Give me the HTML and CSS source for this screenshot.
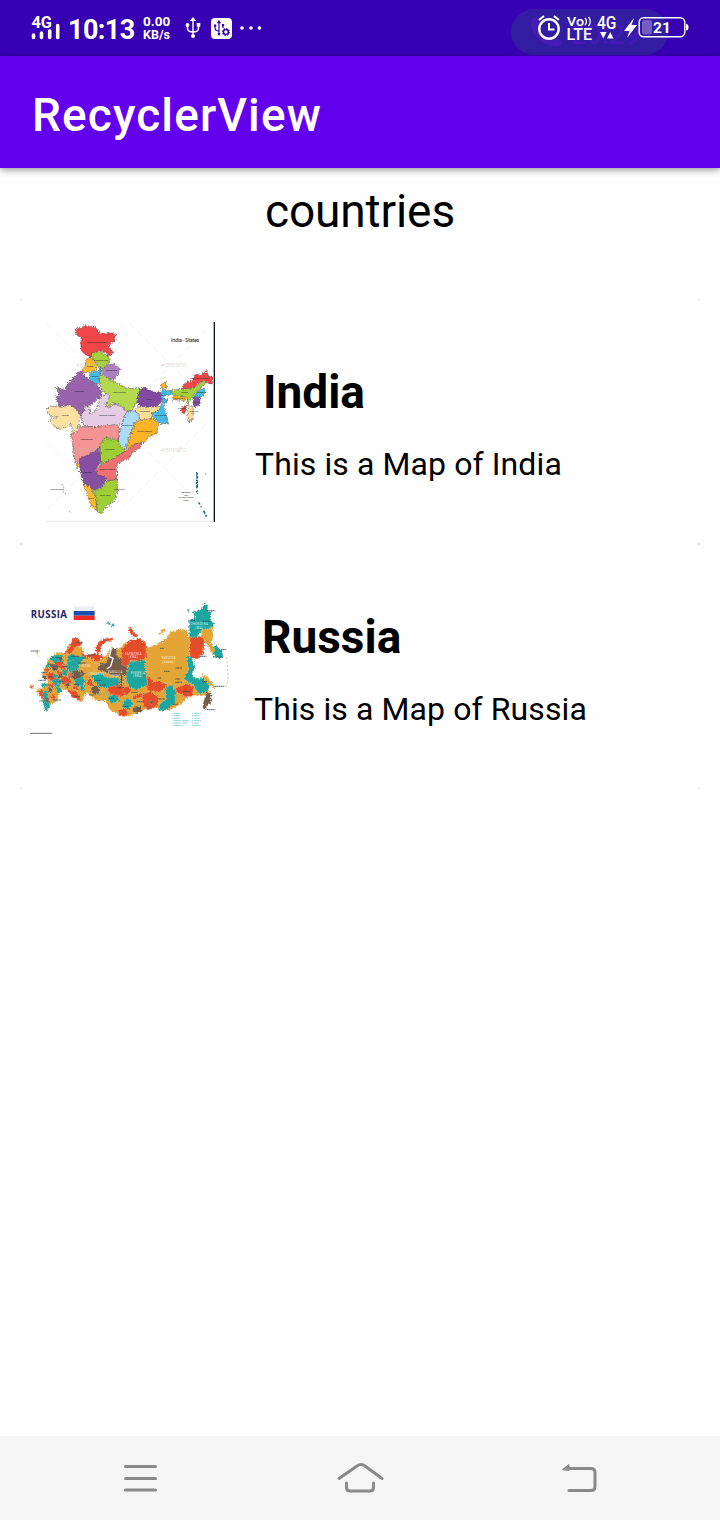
FILE: index.html
```html
<!DOCTYPE html>
<html lang="en">
<head>
<meta charset="utf-8">
<title>RecyclerView</title>
<link rel="stylesheet" href="styles.css">
</head>
<body>
<div class="screen">
  <header class="status">
    <svg class="signal" viewBox="0 0 32 28" width="32" height="28">
      <text x="0.5" y="12.500" font-size="17" font-weight="700" textLength="20.500" lengthAdjust="spacingAndGlyphs">4G</text>
      <path d="M2.500 20v2.500M10.500 18v4.500M18.700 16v6.500M26.700 10.500v12" stroke="#fff" stroke-width="3.600" stroke-linecap="round"/>
    </svg>
    <span class="clock">10:13</span>
    <span class="speed"><span>0.00</span><span class="unit">KB/s</span></span>
    <svg class="usb" viewBox="0 0 16 22" width="16" height="22">
      <path d="M8 3v15M2.500 8v3q0 4 5.500 4t5.500-4V8" fill="none" stroke="#fff" stroke-width="1.400"/>
      <path d="M8 0l3 4H5z"/><circle cx="8" cy="19" r="2"/><circle cx="2.500" cy="8" r="1.900"/><path d="M11.700 6h3.600v3.600h-3.600z"/>
    </svg>
    <svg class="debug" viewBox="0 0 21 21" width="21" height="21">
      <rect width="21" height="21" rx="4"/>
      <g fill="none" stroke="#3700b3" stroke-width="1.200"><path d="M8 4v12M4 8v2q0 3 4 3M12 7v3"/><circle cx="14.900" cy="14" r="2.500" stroke-width="1.600"/><circle cx="14.900" cy="14" r="3.600" stroke-width="1" stroke-dasharray="1.400 1.400"/></g>
      <path d="M8 2l2.200 3.300H5.800zM3 6.500h2.200v2.200H3zM10.900 6h2.200v2.200h-2.200zM6.800 15h2.400v2.300H6.800z" fill="#3700b3"/>
    </svg>
    <svg class="dots" viewBox="0 0 22 6" width="22" height="6"><circle cx="2" cy="3" r="1.800"/><circle cx="11" cy="3" r="1.800"/><circle cx="19.500" cy="3" r="1.800"/></svg>
    <div class="pill">
      <svg viewBox="0 0 157 46" width="157" height="46"><path d="M22 9c5-3 8 3 7 9 0 6 5 9 10 12 7-2 12 1 11 5-2 4-10 3-17-1C23 28 17 15 22 9z" fill="#451db4"/><text x="60" y="35" font-size="27" font-weight="500" fill="#431bb4" textLength="69">20:29</text></svg>
    </div>
    <svg class="tray" viewBox="0 0 156 30" width="156" height="30">
      <g fill="none" stroke="#fff"><circle cx="13" cy="16" r="9.700" stroke-width="2.400"/><path d="M13 10v6.500h5.500" stroke-width="2"/><path d="M3 7l5-4M18 3l5 4" stroke-width="2.200"/></g>
      <text x="31" y="13" font-size="13" font-weight="500" textLength="17" lengthAdjust="spacingAndGlyphs">Vo</text>
      <path d="M49 5q3 3.500 0 7M52.500 4q3.500 4.500 0 9" fill="none" stroke="#fff" stroke-width="1.300"/>
      <text x="30.500" y="26.500" font-size="16" font-weight="500" textLength="25.500" lengthAdjust="spacingAndGlyphs">LTE</text>
      <text x="61" y="15.500" font-size="17.500" font-weight="500" textLength="19.500" lengthAdjust="spacingAndGlyphs">4G</text>
      <path d="M64 19h6.500l-3.200 6.500zM71 25.500h6.500L74.300 19z"/>
      <path d="M98 5L88 18h5.500L91 25l10-13h-5.500z"/>
      <rect x="106" y="7" width="10" height="14.500" rx="2.500" fill="#755cc2"/>
      <rect x="103.200" y="4.700" width="45.600" height="19" rx="4.500" fill="none" stroke="#fff" stroke-width="1.400"/>
      <path d="M150 11q2.500 0 2.500 3.200t-2.500 3.200z"/>
      <text x="117" y="19.500" font-size="15.500" font-weight="700">21</text>
    </svg>
  </header>
  <div class="appbar"><h1>RecyclerView</h1></div>
  <main>
    <h2 class="heading">countries</h2>
    <article class="card">
      <svg class="map" viewBox="-30 36 600 600" width="200" height="200">
        <defs><filter id="rough" x="-5%" y="-5%" width="110%" height="110%"><feTurbulence type="fractalNoise" baseFrequency="0.22" numOctaves="2" seed="4"/><feDisplacementMap in="SourceGraphic" scale="13" xChannelSelector="R" yChannelSelector="G"/></filter></defs>
        <path d="M20 42L180 202M250 42L20 272M270 42L500 272M500 60L250 310M20 400L220 600M500 340L250 590M300 400L500 600M180 440L20 600" fill="none" stroke="#f5f5f5" stroke-width="3" stroke-dasharray="20 14"/>
        <path d="M523 36V636" stroke="#10141c" stroke-width="4"/><path d="M15 634H521" stroke="#ddd" stroke-width="2"/>
        <g filter="url(#rough)" stroke="#554b4b" stroke-width="1.500" stroke-linejoin="round">
          <path fill="#ef4548" d="M106 60L116 52 125 56 128 50 140 44 150 50 160 48 172 58 178 68 186 70 196 72 204 67 210 70 220 68 230 74 222 84 226 92 210 100 206 112 218 124 218 130 206 138 198 128 190 124 176 124 158 130 154 142 136 134 124 122 122 96 124 86 112 76 106 68z"/>
          <path fill="#a5d13c" d="M154 142L158 128 180 124 206 140 210 156 200 164 188 178 176 170 170 158z"/>
          <path fill="#fdb92b" d="M138 148L154 140 166 156 172 168 164 182 140 188 124 182 136 168z"/>
          <path fill="#43bde9" d="M148 194L164 182 174 186 182 172 184 196 176 206 184 226 164 220 150 212z"/>
          <path fill="#ad80c0" d="M188 180L200 164 222 162 240 176 236 190 222 208 204 206 188 196z"/>
          <path fill="#b4d94f" d="M180 190L188 196 212 210 236 222 262 236 298 234 302 256 288 280 278 300 262 304 240 284 214 278 206 292 196 288 206 268 204 256 184 240 178 210z"/>
          <path fill="#9863ac" d="M48 232L72 240 84 222 108 194 124 182 136 200 150 212 168 222 184 244 186 262 168 268 160 282 146 286 130 304 124 320 106 300 90 284 58 290 48 262 58 252z"/>
          <path fill="#fee0a3" d="M18 300L30 288 60 292 90 284 112 300 122 318 116 338 114 352 100 370 92 340 78 354 60 358 44 350 28 330 40 328 52 320 36 322 26 312z"/>
          <path fill="#e4cce4" d="M128 338L122 318 134 300 132 288 150 288 148 312 166 304 176 280 182 260 200 250 208 258 206 272 196 286 206 294 222 280 244 290 262 304 254 318 246 344 222 346 196 352 160 350 140 352z"/>
          <path fill="#814a9f" d="M298 240L314 232 340 246 366 248 364 276 350 290 322 292 302 288 290 276z"/>
          <path fill="#fdb92b" d="M364 222L376 216 380 232 364 236z"/>
          <path fill="#43bde9" d="M366 238L394 242 396 252 382 258 372 250 372 264 384 270 370 286 376 306 386 342 360 340 342 320 334 306 360 290 368 276 364 256z"/>
          <path fill="#fedd96" d="M290 290L322 292 350 290 362 292 352 306 334 308 340 324 322 332 300 330 294 312 284 302z"/>
          <path fill="#a8dcf7" d="M262 304L282 302 298 312 296 330 282 338 280 360 266 378 264 398 252 422 238 408 234 376 244 350 252 324z"/>
          <path fill="#fcb328" d="M298 332L340 324 356 342 350 370 330 378 314 396 286 402 258 418 272 376 282 342z"/>
          <path fill="#f49394" d="M94 370L112 366 116 350 160 350 222 344 236 350 238 376 232 394 214 384 196 382 194 400 180 412 168 424 152 430 122 448 118 460 106 458 100 420z"/>
          <path fill="#9fce35" d="M180 404L196 382 222 390 234 390 244 410 258 422 230 440 210 454 184 460 178 440z"/>
          <path fill="#f07072" d="M310 396L286 402 258 422 232 440 184 462 166 480 172 496 192 500 202 512 230 508 230 464 246 454 268 444 276 430 300 412z"/>
          <path fill="#874fa2" d="M118 446L150 432 180 410 182 456 166 480 174 496 198 502 194 516 182 534 160 540 136 526 124 500 120 474z"/>
          <path fill="#fdb92b" d="M130 520L150 530 166 560 172 602 158 594 148 572zM108 462l8-2 4 12-6 2z"/>
          <path fill="#9fce35" d="M182 536L198 514 232 508 232 548 220 576 196 590 184 612 172 604 166 560 160 542z"/>
          <path fill="#ef4548" d="M424 238L436 218 456 212 468 192 482 196 500 182 504 198 520 202 516 222 502 220 490 212 474 220 462 234z"/>
          <path fill="#a5d13c" d="M398 240L428 238 462 234 490 212 496 222 474 242 458 258 444 282 440 262 398 262z"/>
          <path fill="#fdb92b" d="M398 256L440 262 444 268 428 272 398 268z"/>
          <path fill="#43bde9" d="M470 248L490 234 498 246 482 262 460 260z"/>
          <path fill="#8350a5" d="M458 262L480 262 480 286 462 290z"/><path fill="#fedd96" d="M446 286L460 290 458 330 448 336 442 310z"/><path fill="#e84145" d="M424 294L440 286 434 312 424 306z"/>
        </g>
        <g class="watermark"><text x="106" y="170">◕envato</text><text x="360" y="170">◕envato</text><text x="106" y="427">◕envato</text><text x="360" y="427">◕envato</text></g>
        <g fill="none" stroke="#236b8d"><path d="M472 486l-2 66" stroke-width="6" stroke-dasharray="20 3 26 6" filter="url(#rough)"/><path d="M476 578l16 26 10 20" stroke-width="5" stroke-dasharray="6 7 3 12 10 4"/></g>
        <path d="M66 522l6 12-3 12 10 6M88 604l3 3M206 588l10 2M496 490v5" fill="none" stroke="#555" stroke-width="2" stroke-dasharray="4 4"/>
        <g class="labels">
          <text x="170" y="100">Jammu and Kashmir</text><text x="184" y="152">Himachal Prad.</text><text x="150" y="171">Punjab</text><text x="164" y="201">Haryana</text><text x="214" y="184">Uttarakhand</text><text x="238" y="248">Uttar Pradesh</text><text x="118" y="247">Rajasthan</text><text x="328" y="270">Bihar</text><text x="76" y="318">Gujarat</text><text x="202" y="319">Madhya Pradesh</text><text x="314" y="307">Jharkhand</text><text x="362" y="317">West Bengal</text><text x="264" y="348">Chhattisgarh</text><text x="314" y="366">Orissa (Odisha)</text><text x="140" y="391">Maharashtra</text><text x="208" y="420">Telangana</text><text x="202" y="480">Andhra Pradesh</text><text x="142" y="490">Karnataka</text><text x="196" y="558">Tamil Nadu</text><text x="152" y="567">Kerala</text><text x="238" y="540">Puducherry</text><text x="50" y="541">Lakshadweep</text><text x="478" y="207">Arunachal Pradesh</text><text x="434" y="248">Assam</text><text x="418" y="268">Meghalaya</text><text x="484" y="250">Nagaland</text><text x="468" y="278">Manipur</text><text x="462" y="306">Mizoram</text><text x="424" y="298">Tripura</text><text x="438" y="549">Andaman</text><text x="438" y="557">and</text><text x="438" y="565">Nicobar Islands</text><text x="438" y="573">(India)</text>
        </g>
        <text x="393" y="95" font-size="16" fill="#222" textLength="85">India - States</text>
      </svg>
      <div class="info"><h3>India</h3><p>This is a Map of India</p></div>
    </article>
    <article class="card russia">
      <svg class="map" viewBox="30 -84 600 600" width="200" height="200">
        <text x="32" y="68" class="rtitle" textLength="109">RUSSIA</text>
        <path fill="#eceef1" d="M161 34h63v14h-63z"/><path fill="#1750b0" d="M161 48h63v14h-63z"/><path fill="#ee2927" d="M161 62h63v13h-63z"/>
        <path d="M30 415h66" stroke="#555" stroke-width="2.500"/>
        <g filter="url(#rough)" stroke="#e4d3b1" stroke-width=".8">
          <path fill="#e3a535" d="M84 196L110 172 134 174 150 144 190 160 190 184 240 194 262 178 270 160 300 158 320 140 374 140 384 160 500 104 510 180 512 260 560 270 570 300 548 302 510 300 490 322 450 346 420 346 400 330 350 356 310 364 270 346 256 316 230 318 200 292 184 320 160 308 150 284 120 284 110 320 86 330 80 350 70 318 56 302 48 284 72 278 84 258 66 236 74 218z"/>
          <path fill="#e54e2b" d="M132 178L150 154 158 130 172 128 184 142 184 154 166 154 156 174z"/>
          <path fill="#e54e2b" d="M184 166l12 14 34-6 20 10-16 16-30-14-18 0zM226 162l6-16 18-14 28-4 2 6-22 6-16 16 0 16-12 0z"/>
          <path fill="#1ba69f" d="M258 82l10 0 4 8-8-2zM274 88l8-3 4 6-8 4zM142 184l14-8 18 10 16-4 4 22-26 10-28-4zM86 192l18-12 24 0 2 22-22 4zM212 240l28-6 24 14 34 2 0 24-26 8-32-6-16-16z"/>
          <path fill="#745b4c" d="M232 212l26-8 14-42 18-2 0 24 12 6 18 4 4 46-42 4-30-14-20-6zM150 228l20-6 22 16-6 16-24 2zM90 210l22-6 10 14-22 10zM212 276l24-6 4 20-14 10-12-8z"/>
          <path fill="#e54e2b" d="M98 202l26-2 20 12-20 10zM80 236l18-4 16 14-14 14-16-8zM128 242l20 4 8 18-22 8-14-14zM198 270l12-28 10 32zM142 284l28 4 16 32-28-12zM262 276l36-6 18 12 4 18-28 6-26-12zM52 288l16-4 8 22-10 6zM296 344l22-4 8 16-14 10-16-6z"/>
          <path fill="#1ba69f" d="M96 256l16-6 16 8-6 18-20-2zM142 200l26-4 10 22-22 14-20-12zM128 222l16 4-2 18-18-6zM162 256l22-10 16 12-14 16-20 6zM68 290l14-4 4 26 4 22-12 16-8-20zM106 272l10-4 10 20-14 10zM232 294l26-6 6 14-20 8zM260 306l28-8 12 20-26 8z"/>
          <path fill="#745b4c" d="M112 238l12-4 6 12-14 4zM68 240l12 4-2 12-12-8zM136 262l12 2 2 12-12 2zM76 310l8-4 4 14-8 4zM178 228l14-4 6 10-12 8zM84 276l12 2 4 12-12 4zM116 186l12 2-2 10-10-2z"/>
          <path fill="#e54e2b" d="M108 226l14 2 4 10-14-2zM72 222l14-4 4 8-12 4zM160 270l16 4-2 12-14-4zM96 298l10 4-4 14-10-4zM116 210l20 2-2 10-14-2zM90 266l14 2-4 10-12-2zM146 232l12 6-4 8-10-4z"/>
          <path fill="#1ba69f" d="M76 210l12-6 4 10-12 4zM100 236l10 2 2 10-12 0zM152 214l12 4-2 12-10-6zM62 268l14-6 2 12-10 4zM114 258l10 2 0 10-10-2zM180 270l12 2 4 14-14 2z"/>
          <path fill="#e3a535" d="M184 198l28-8 26 24-28 24-24-10zM236 290l22 0 4 24-16 8zM50 170l6 4-2 8-5-5zM120 268l10 2 6 12-14-2zM132 206l10 0 0 10-12-2z"/>
          <path fill="#e54e2b" d="M30 270l12 4 0 6-10 2zM326 96l10 4 6 14 12 4-4 8-12-2-10-12zM304 162L320 146 330 134 360 130 378 146 378 190 356 198 332 196 322 216 306 210z"/>
          <path fill="#e3a535" d="M418 114l10-12 8 0-4 10-10 8z"/>
          <path fill="#1ba69f" d="M328 200L376 196 378 236 382 270 350 284 328 276 318 250zM310 318l18-10 12 20-16 16-18-8z"/>
          <path fill="#e3a535" d="M378 160L410 150 440 130 450 112 480 102 500 106 506 124 514 134 508 170 500 186 508 220 492 262 470 272 440 262 430 276 400 268 384 250 376 212 380 182z"/>
          <path fill="#e54e2b" d="M382 240l18 20 24 0 18 10-22 20-38-2zM510 126l34-2 10 6-4 46-18 16-22-4zM466 280l36-14 20 10-6 28-18 2-26-14zM366 298l26-8 22 16 0 28-30 12-16-16z"/>
          <path fill="#e54e2b" d="M308 278l14-4 12 12-10 12-16-4zM338 302l24-8 6 10-26 10z"/>
          <path fill="#1ba69f" d="M500 186l14 0 12 30-10 20 6 14 36 0 12 24-10 18-26 4-14-26-28-18 14-30zM436 278l18-8 12 18 0 36-26 20-26 4 6-24 18-10z"/>
          <path fill="#1ba69f" d="M508 98l0-20 18-10-8-18 24-6 10-18 12 4-2 16 14 8-6 22 14 8-10 20-28 4-18 20-20-2zM504 42l6 2-4 10zM584 148l22 20 4 20-16 2-16-10z"/>
          <path fill="#e3a535" d="M538 108l38-12 4 28-6 20 10 20-6 14-18-32-16-26zM548 236l22 20 18 20-6 4-26-20-10-18z"/>
          <path fill="#745b4c" d="M560 290l14 4 0 28-14 10-2 12-10-4 2-20 4-8zM340 334l22 0 6 14-18 8-12-6zM300 234l8 6 0 34-10-6zM388 320l8-4 4 8-8 6z"/>
        </g>
        <path d="M619 188q6 30 4 70l-7 24" fill="none" stroke="#e3b45b" stroke-width="3" stroke-dasharray="5 7"/>
        <path d="M274 160l-6 25 11 5-7 24-12 8" fill="none" stroke="#fff" stroke-width="4"/>
        <path d="M84 206l14 3M105 188h20M96 222h17M86 246h14M112 259h18M76 270h14M130 214h15M146 246h16M162 268h15M174 204h24M188 189h17M204 180h20M160 304h18M224 256h20M240 270h18M208 300h15M292 278h20M266 310h16M308 334h15M334 292h18M350 320h20M412 312h22M458 328h16M490 290h20M546 260h15M560 344h26M584 274h30M540 184h20M580 186h24M560 47h26M602 164h18M505 76h20M548 79h22M166 142h22M32 168h26M58 318h19M103 315h20M55 256h22M64 233h18M420 160h12M466 219h20M432 229h18M412 249h12M466 252h15M466 262h20M154 184h25M240 205h12" fill="none" stroke="#34465f" stroke-width="2.500" stroke-dasharray="4 1 6 1"/>
        <g class="region-labels"><text x="446" y="192">YAKUTIA</text><text x="446" y="205">(Sakha)</text><text x="340" y="180">TAYMYRIA</text><text x="340" y="190">(KRA)</text><text x="354" y="236">EVENKIA</text><text x="354" y="246">(KRA)</text><text x="538" y="90">CHUKOTKA</text><text x="538" y="101">(MA)</text><text x="286" y="235">YAMALIA</text><text x="286" y="245">(NEN)</text><text x="200" y="217">KOMI</text><text x="232" y="241">KHANTY</text></g>
        <path d="M457 355h26M457 362h25M457 370h21M457 377h52M457 384h44M457 391h34M516 355h27M516 362h22M516 370h24M516 377h28M516 384h20M516 391h26" stroke="#8ed4d0" stroke-width="3" stroke-dasharray="3 2 18 1"/>
      </svg>
      <div class="info"><h3>Russia</h3><p>This is a Map of Russia</p></div>
    </article>
  </main>
  <nav class="navbar">
    <svg viewBox="0 0 48 32" width="48" height="32"><path d="M9.500 4.500h30M9.500 16.500h30M9.500 28h30"/></svg>
    <svg viewBox="0 0 48 32" width="48" height="32"><path d="M3 16.500L21 4q4-3 8 0l17 12.500M10.500 21v4.500q0 3.500 3.500 3.500H34q3.500 0 3.500-3.500V21"/></svg>
    <svg viewBox="0 0 48 32" width="48" height="32"><path d="M13 6.500h22q4 0 4 4v14q0 4-4 4H13"/><path d="M6.500 7.500L13 2.500V8z" class="tip"/></svg>
  </nav>
</div>
</body>
</html>
```
FILE: styles.css
```css
* { box-sizing: border-box; }
body { margin: 0; font-family: Roboto, sans-serif; background: #fefefe; color: #000; }
h1, h2, h3, p { margin: 0; font-weight: 400; }
svg { display: block; flex: none; }
.screen { width: 720px; height: 1520px; display: flex; flex-direction: column; overflow: hidden; }
.status { position: relative; height: 56px; flex: none; background: #3700b3; color: #fff; fill: #fff; display: flex; align-items: center; padding-left: 31px; }
.signal { margin-top: 1px; }
.clock { width: 66px; margin-left: 5px; margin-top: 3px; font-size: 27px; font-weight: 700; line-height: 32px; white-space: nowrap; letter-spacing: -0.6px; }
.speed { width: 30px; margin-left: 9px; display: flex; flex-direction: column; font-size: 13.5px; font-weight: 700; line-height: 13px; }
.speed .unit { font-size: 12.5px; }
.usb { margin-left: 12px; }
.debug { margin-left: 10px; }
.dots { margin-left: 8px; }
.pill { position: absolute; left: 511px; top: 9px; width: 157px; height: 46px; border-radius: 23px; background: #321ca2; }
.tray { position: relative; margin-left: auto; margin-right: 28px; }
.appbar { position: relative; height: 112px; flex: none; background: #6200ee; color: #fff; padding: 0 32px; display: flex; align-items: center; box-shadow: 0 2px 7px rgba(0, 0, 0, .4); }
.appbar h1 { font-size: 46px; font-weight: 500; letter-spacing: 1.1px; line-height: 54px; margin-top: 5px; }
main { flex: 1; display: flex; flex-direction: column; }
.heading { text-align: center; font-size: 46px; letter-spacing: -.1px; line-height: 54px; height: 131px; padding-top: 16px; }
.card { height: 245px; margin: 0 20px; padding: 0 10px; display: flex; align-items: center; background:
  linear-gradient(#ddd, #ddd) 0 0 / 2px 1px no-repeat, linear-gradient(#ddd, #ddd) 100% 0 / 2px 1px no-repeat,
  linear-gradient(#ddd, #ddd) 0 100% / 2px 1px no-repeat, linear-gradient(#ddd, #ddd) 100% 100% / 2px 1px no-repeat; }
.map { overflow: visible; }
.info { margin-left: 25px; margin-top: 4px; display: flex; flex-direction: column; }
.info h3 { font-size: 46px; font-weight: 700; line-height: 54px; margin-left: 8px; }
.info p { font-size: 32px; line-height: 38px; letter-spacing: .1px; margin-top: 26px; }
.russia .info { margin-left: 24px; }
.watermark { font-size: 22px; fill: #bbb; fill-opacity: .45; }
.labels { font-size: 6.500px; fill: #222; text-anchor: middle; }
.rtitle { font-family: "Open Sans", sans-serif; font-weight: 700; font-size: 29px; fill: #1c1f61; }
.region-labels { font-size: 9px; fill: #fff; fill-opacity: .85; text-anchor: middle; letter-spacing: 1px; }
.navbar { height: 84px; flex: none; background: #f5f5f5; display: flex; justify-content: space-between; padding: 26px 116px 0; align-items: flex-start; }
.navbar path { fill: none; stroke: #898989; stroke-width: 3; stroke-linecap: round; stroke-linejoin: round; }
.navbar .tip { fill: #898989; stroke-width: 1; }
```
